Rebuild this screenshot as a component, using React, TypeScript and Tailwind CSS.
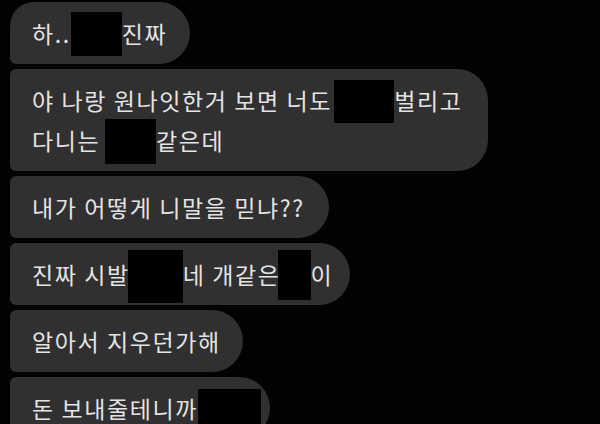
import React from "react";

const Box = ({ w, h, cls = "" }: { w: string; h: string; cls?: string }) => (
  <span className={`inline-block shrink-0 bg-black ${w} ${h} ${cls}`} />
);

export default function App() {
  return (
    <div
      className="w-[600px] h-[424px] overflow-hidden bg-[#020202] pl-[10px] pt-[2px] flex flex-col items-start gap-[5px] text-[23px] tracking-[1.6px] text-[#e4e4e4]"
      style={{ fontFamily: '"Noto Sans CJK KR", "Noto Sans", sans-serif' }}
    >
      {/* bubble 1 */}
      <div className="bg-[#303030] rounded-tl-[24px] rounded-bl-[6px] rounded-r-[31px] pl-[22px] pr-[23px] py-[11px]">
        <div className="flex items-center h-[40px] whitespace-pre">
          <span>하..</span>
          <Box w="w-[51px]" h="h-[44px]" cls="mt-[2px]" />
          <span>진짜</span>
        </div>
      </div>
      {/* bubble 2 */}
      <div className="bg-[#303030] rounded-l-[6px] rounded-r-[31px] pl-[22px] pr-[26px] py-[11px]">
        <div className="flex items-center h-[40px] whitespace-pre">
          <span>야 나랑 원나잇한거 보면 너도</span>
          <Box w="w-[60px]" h="h-[43px]" cls="mt-[2px] ml-[2px]" />
          <span>벌리고</span>
        </div>
        <div className="flex items-center h-[40px] whitespace-pre">
          <span>다니는 </span>
          <Box w="w-[51px]" h="h-[45px]" cls="mt-[3px] -ml-[2px]" />
          <span>같은데</span>
        </div>
      </div>
      {/* bubble 3 */}
      <div className="bg-[#303030] rounded-l-[6px] rounded-r-[31px] pl-[22px] pr-[24px] py-[11px]">
        <div className="flex items-center h-[40px] whitespace-pre">
          <span>내가 어떻게 니말을 믿냐??</span>
        </div>
      </div>
      {/* bubble 4 */}
      <div className="bg-[#303030] rounded-l-[6px] rounded-r-[31px] pl-[22px] pr-[17px] py-[11px]">
        <div className="flex items-center h-[40px] whitespace-pre">
          <span>진짜 시발</span>
          <Box w="w-[55px]" h="h-[53px]" cls="mt-[4px] -ml-[2px]" />
          <span>네 개같은</span>
          <Box w="w-[33px]" h="h-[50px]" cls="mt-[2px] -ml-[3px]" />
          <span>이</span>
        </div>
      </div>
      {/* bubble 5 */}
      <div className="bg-[#303030] rounded-l-[6px] rounded-r-[31px] pl-[22px] pr-[22px] py-[11px]">
        <div className="flex items-center h-[40px] whitespace-pre">
          <span>알아서 지우던가해</span>
        </div>
      </div>
      {/* bubble 6 */}
      <div className="bg-[#303030] rounded-l-[6px] rounded-r-[31px] pl-[22px] pr-[9px] py-[11px]">
        <div className="flex items-center h-[40px] whitespace-pre">
          <span>돈 보내줄테니까</span>
          <Box w="w-[63px]" h="h-[50px]" cls="mt-[12px]" />
        </div>
      </div>
    </div>
  );
}
